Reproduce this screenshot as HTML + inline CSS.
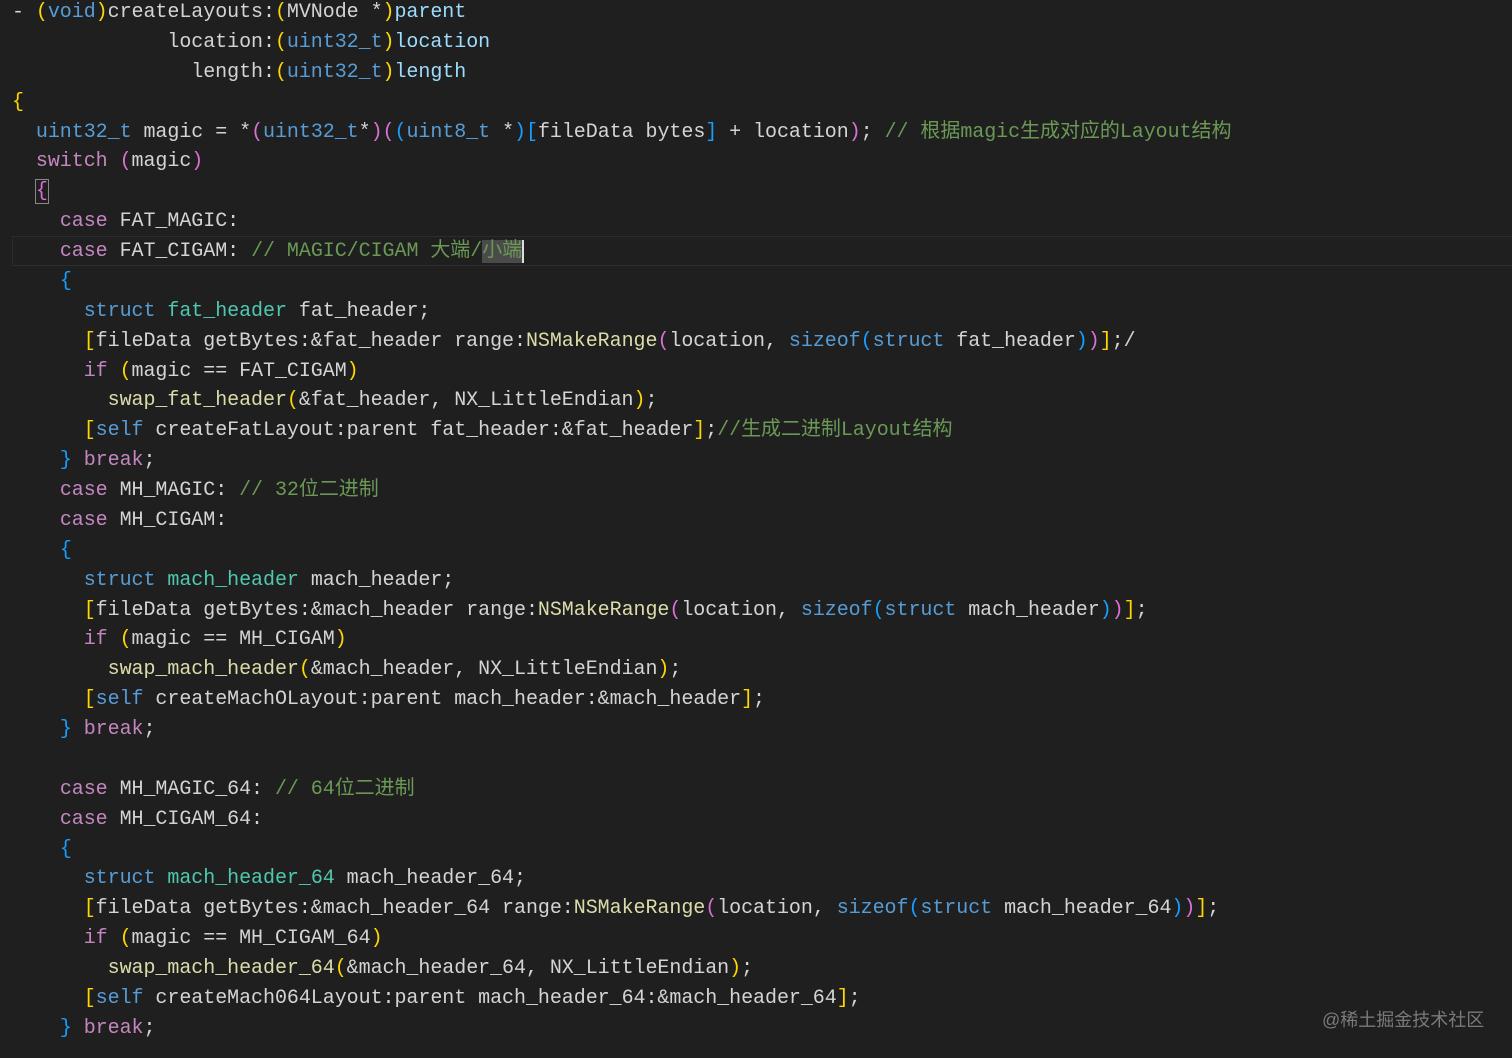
<!DOCTYPE html>
<html><head><meta charset="utf-8"><style>
html,body{margin:0;padding:0;background:#1f1f1f;width:1512px;height:1058px;overflow:hidden}
pre{position:absolute;left:12px;top:-2px;margin:0;font-family:"Liberation Mono","Noto Sans CJK SC",monospace;font-size:20px;line-height:29.87px;letter-spacing:-0.05px;color:#d4d4d4;white-space:pre}
.k{color:#569cd6}.c{color:#c586c0}.f{color:#dcdcaa}.t{color:#4ec9b0}.v{color:#9cdcfe}.cm{color:#6a9955}.y{color:#ffd700}.p{color:#da70d6}.b{color:#179fff}
.hl{position:absolute;left:12px;top:236px;width:1500px;height:28px;border:1px solid #2c2c2c;border-right:none}
.box{outline:1px solid #888;outline-offset:0}
.sel{background:#4a4a4a}
.cur{border-right:2px solid #ddd}
.wm{position:absolute;left:1322px;top:1006px;font-family:"Liberation Sans","Noto Sans CJK SC",sans-serif;font-size:18px;color:#7a7a7a}
</style></head><body>
<div class="hl"></div>
<pre>- <span class="y">(</span><span class="k">void</span><span class="y">)</span>createLayouts:<span class="y">(</span>MVNode *<span class="y">)</span><span class="v">parent</span>
             location:<span class="y">(</span><span class="k">uint32_t</span><span class="y">)</span><span class="v">location</span>
               length:<span class="y">(</span><span class="k">uint32_t</span><span class="y">)</span><span class="v">length</span>
<span class="y">{</span>
  <span class="k">uint32_t</span> magic = *<span class="p">(</span><span class="k">uint32_t</span>*<span class="p">)(</span><span class="b">(</span><span class="k">uint8_t</span> *<span class="b">)[</span>fileData bytes<span class="b">]</span> + location<span class="p">)</span>; <span class="cm">// 根据magic生成对应的Layout结构</span>
  <span class="c">switch</span> <span class="p">(</span>magic<span class="p">)</span>
  <span class="p box">{</span>
    <span class="c">case</span> FAT_MAGIC:
    <span class="c">case</span> FAT_CIGAM: <span class="cm">// MAGIC/CIGAM 大端/<span class="sel cur">小端</span></span>
    <span class="b">{</span>
      <span class="k">struct</span> <span class="t">fat_header</span> fat_header;
      <span class="y">[</span>fileData getBytes:&amp;fat_header range:<span class="f">NSMakeRange</span><span class="p">(</span>location, <span class="k">sizeof</span><span class="b">(</span><span class="k">struct</span> fat_header<span class="b">)</span><span class="p">)</span><span class="y">]</span>;/
      <span class="c">if</span> <span class="y">(</span>magic == FAT_CIGAM<span class="y">)</span>
        <span class="f">swap_fat_header</span><span class="y">(</span>&amp;fat_header, NX_LittleEndian<span class="y">)</span>;
      <span class="y">[</span><span class="k">self</span> createFatLayout:parent fat_header:&amp;fat_header<span class="y">]</span>;<span class="cm">//生成二进制Layout结构</span>
    <span class="b">}</span> <span class="c">break</span>;
    <span class="c">case</span> MH_MAGIC: <span class="cm">// 32位二进制</span>
    <span class="c">case</span> MH_CIGAM:
    <span class="b">{</span>
      <span class="k">struct</span> <span class="t">mach_header</span> mach_header;
      <span class="y">[</span>fileData getBytes:&amp;mach_header range:<span class="f">NSMakeRange</span><span class="p">(</span>location, <span class="k">sizeof</span><span class="b">(</span><span class="k">struct</span> mach_header<span class="b">)</span><span class="p">)</span><span class="y">]</span>;
      <span class="c">if</span> <span class="y">(</span>magic == MH_CIGAM<span class="y">)</span>
        <span class="f">swap_mach_header</span><span class="y">(</span>&amp;mach_header, NX_LittleEndian<span class="y">)</span>;
      <span class="y">[</span><span class="k">self</span> createMachOLayout:parent mach_header:&amp;mach_header<span class="y">]</span>;
    <span class="b">}</span> <span class="c">break</span>;

    <span class="c">case</span> MH_MAGIC_64: <span class="cm">// 64位二进制</span>
    <span class="c">case</span> MH_CIGAM_64:
    <span class="b">{</span>
      <span class="k">struct</span> <span class="t">mach_header_64</span> mach_header_64;
      <span class="y">[</span>fileData getBytes:&amp;mach_header_64 range:<span class="f">NSMakeRange</span><span class="p">(</span>location, <span class="k">sizeof</span><span class="b">(</span><span class="k">struct</span> mach_header_64<span class="b">)</span><span class="p">)</span><span class="y">]</span>;
      <span class="c">if</span> <span class="y">(</span>magic == MH_CIGAM_64<span class="y">)</span>
        <span class="f">swap_mach_header_64</span><span class="y">(</span>&amp;mach_header_64, NX_LittleEndian<span class="y">)</span>;
      <span class="y">[</span><span class="k">self</span> createMach064Layout:parent mach_header_64:&amp;mach_header_64<span class="y">]</span>;
    <span class="b">}</span> <span class="c">break</span>;</pre>
<div class="wm">@稀土掘金技术社区</div>
</body></html>
